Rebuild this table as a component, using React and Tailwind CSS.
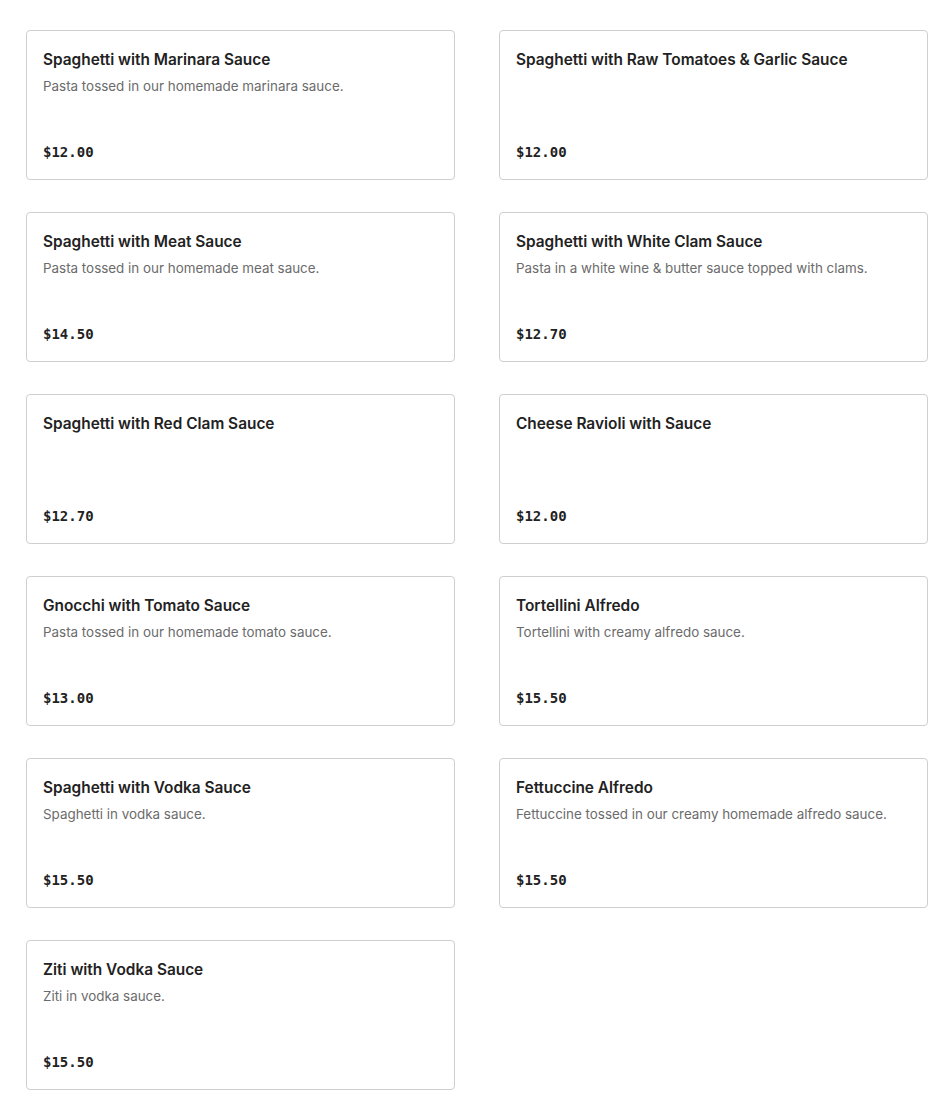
import React from "react";

const items = [
  ["Spaghetti with Marinara Sauce", "Pasta tossed in our homemade marinara sauce.", "$12.00"],
  ["Spaghetti with Raw Tomatoes & Garlic Sauce", "", "$12.00"],
  ["Spaghetti with Meat Sauce", "Pasta tossed in our homemade meat sauce.", "$14.50"],
  ["Spaghetti with White Clam Sauce", "Pasta in a white wine & butter sauce topped with clams.", "$12.70"],
  ["Spaghetti with Red Clam Sauce", "", "$12.70"],
  ["Cheese Ravioli with Sauce", "", "$12.00"],
  ["Gnocchi with Tomato Sauce", "Pasta tossed in our homemade tomato sauce.", "$13.00"],
  ["Tortellini Alfredo", "Tortellini with creamy alfredo sauce.", "$15.50"],
  ["Spaghetti with Vodka Sauce", "Spaghetti in vodka sauce.", "$15.50"],
  ["Fettuccine Alfredo", "Fettuccine tossed in our creamy homemade alfredo sauce.", "$15.50"],
  ["Ziti with Vodka Sauce", "Ziti in vodka sauce.", "$15.50"],
];

export default function App() {
  return (
    <div className="bg-white min-h-[1104px] pt-[30px] pl-[26px] pr-[22px] font-['Inter',sans-serif]">
      <div className="grid grid-cols-[429px_429px] gap-x-[44px] gap-y-[32px]">
        {items.map(([t, d, p]) => (
          <div key={t} className="h-[150px] border border-[#cfcfcf] rounded-[4px] pt-[17px] px-[16px] pb-[17px] flex flex-col">
            <div className="text-[15.4px] leading-6 font-semibold text-[#222222]">{t}</div>
            {d && <div className="mt-[4px] text-[13.4px] leading-5 text-[#6b6b6b]">{d}</div>}
            <div className="mt-auto text-[14px] leading-5 font-bold text-[#222222] font-['DejaVu_Sans_Mono',monospace]">{p}</div>
          </div>
        ))}
      </div>
    </div>
  );
}
